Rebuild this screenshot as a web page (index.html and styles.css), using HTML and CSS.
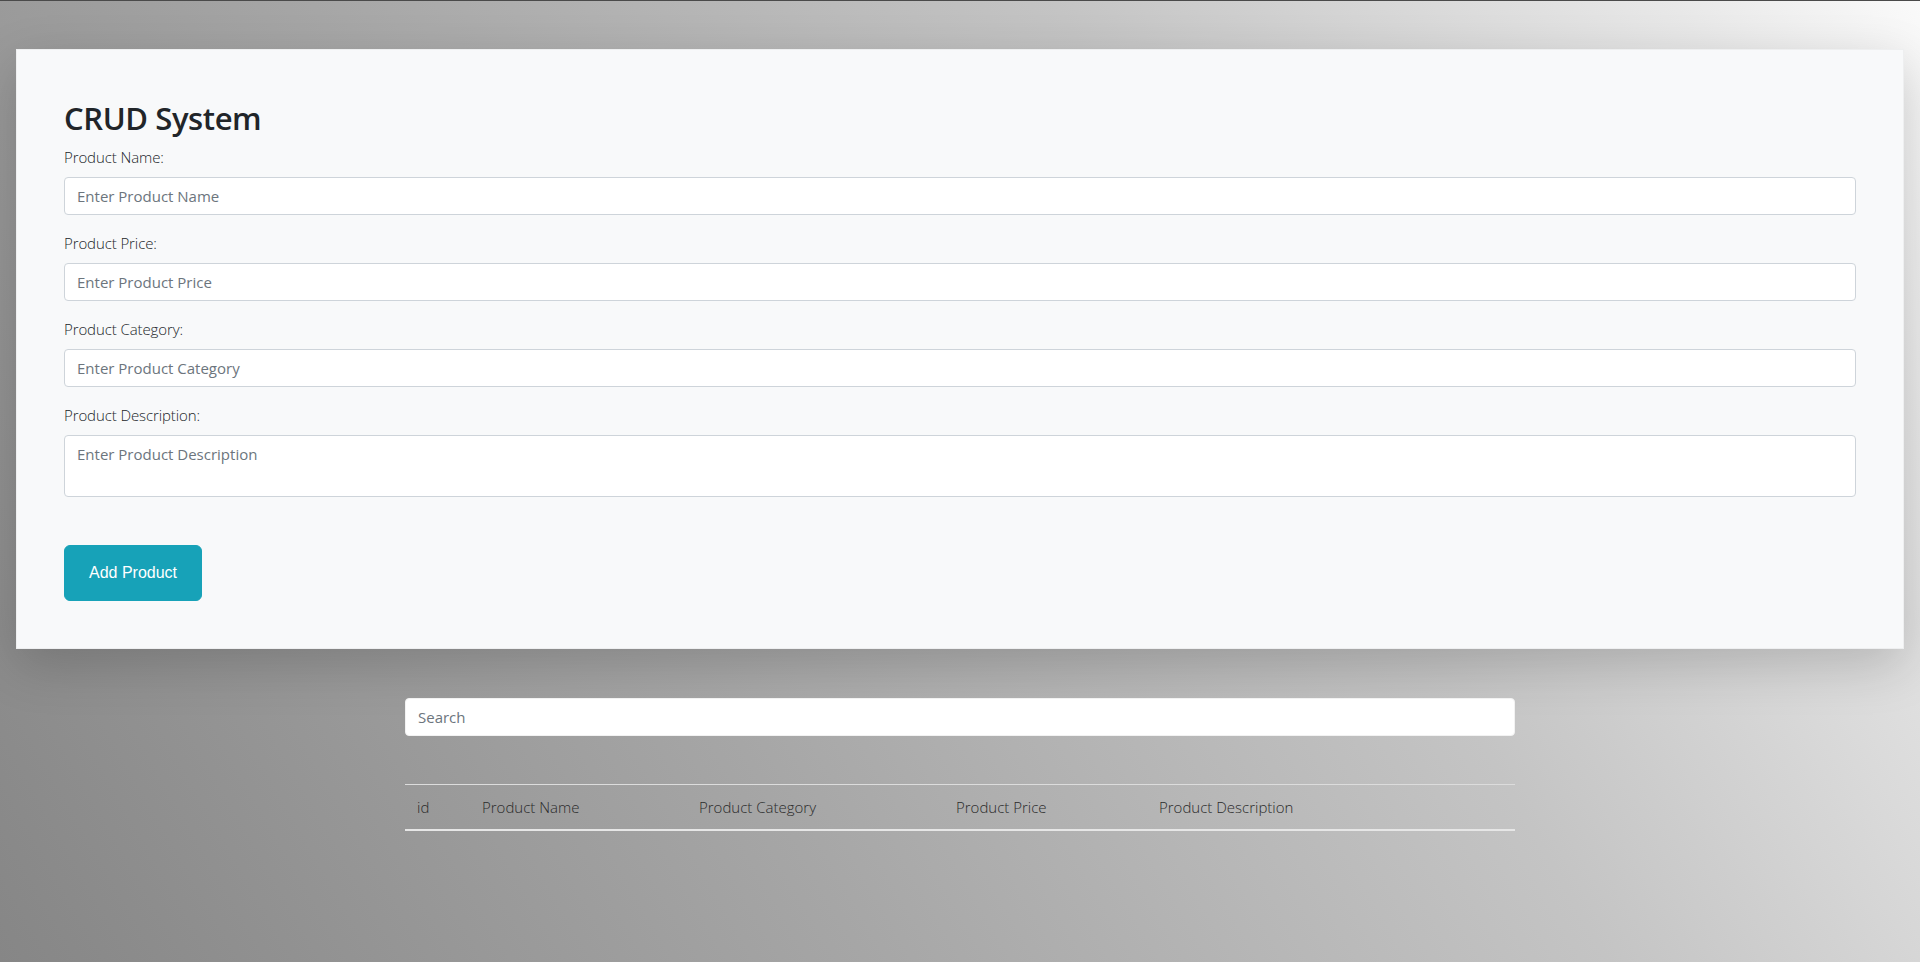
FILE: index.html
```html
<!DOCTYPE html>
<html lang="en">
<head>
<meta charset="utf-8">
<title>CRUD System</title>
<link rel="stylesheet" href="styles.css">
</head>
<body>
  <main class="page">
    <section class="card">
      <h2 class="title">CRUD System</h2>
      <div class="field">
        <label class="label" for="pname">Product Name:</label>
        <input class="control" id="pname" type="text" placeholder="Enter Product Name">
      </div>
      <div class="field">
        <label class="label" for="pprice">Product Price:</label>
        <input class="control" id="pprice" type="text" placeholder="Enter Product Price">
      </div>
      <div class="field">
        <label class="label" for="pcat">Product Category:</label>
        <input class="control" id="pcat" type="text" placeholder="Enter Product Category">
      </div>
      <div class="field field-last">
        <label class="label" for="pdesc">Product Description:</label>
        <textarea class="control textarea" id="pdesc" rows="2" placeholder="Enter Product Description"></textarea>
      </div>
      <button class="btn-add" type="button">Add Product</button>
    </section>

    <section class="container">
      <input class="control search" type="text" placeholder="Search">
      <table class="table">
        <colgroup>
          <col class="c-id">
          <col class="c-name">
          <col class="c-cat">
          <col class="c-price">
          <col class="c-desc">
        </colgroup>
        <thead>
          <tr>
            <th>id</th>
            <th>Product Name</th>
            <th>Product Category</th>
            <th>Product Price</th>
            <th>Product Description</th>
          </tr>
        </thead>
        <tbody></tbody>
      </table>
    </section>
  </main>
</body>
</html>
```

FILE: styles.css
```css
* {
  box-sizing: border-box;
}

html, body {
  margin: 0;
  padding: 0;
}

body {
  min-height: 962px;
  font-family: "Open Sans", "Noto Sans", "DejaVu Sans", sans-serif;
  font-size: 15px;
  line-height: 24px;
  color: #212529;
  border-top: 1px solid #4a4a4a;
  background: linear-gradient(60deg, #868686 0%, #a6a6a6 35%, #c4c4c4 65%, #e8e8e8 90%, #fafafa 100%);
}

.page {
  display: flex;
  flex-direction: column;
  padding: 48px 16px 0;
}

.card {
  background: #f8f9fa;
  border: 1px solid rgba(0, 0, 0, 0.04);
  padding: 47px 47px 47px;
  box-shadow: 0 16px 48px rgba(0, 0, 0, 0.18);
  display: flex;
  flex-direction: column;
  align-items: flex-start;
}

.title {
  margin: 0 0 8px;
  padding-top: 2px;
  font-size: 31px;
  line-height: 38px;
  font-weight: 600;
  color: #212529;
  letter-spacing: -0.4px;
}

.field {
  width: 100%;
  margin-bottom: 16px;
  display: flex;
  flex-direction: column;
}

.field-last {
  margin-bottom: 0;
}

.label {
  display: block;
  margin-bottom: 8px;
  font-weight: 300;
  color: #212529;
  letter-spacing: -0.1px;
}

.control {
  display: block;
  width: 100%;
  height: 38px;
  padding: 6px 12px;
  font-family: "Open Sans", "Noto Sans", "DejaVu Sans", sans-serif;
  font-size: 15px;
  line-height: 24px;
  color: #495057;
  background: #fff;
  border: 1px solid #ced4da;
  border-radius: 4px;
  outline: none;
}

.control::placeholder {
  color: #6c757d;
  opacity: 1;
}

.textarea {
  height: 62px;
  resize: none;
}

.btn-add {
  margin-top: 48px;
  padding: 15px 24px;
  font-family: "Liberation Sans", Arial, sans-serif;
  font-size: 16px;
  line-height: 24px;
  color: #fff;
  background: #17a2b8;
  border: 1px solid #17a2b8;
  border-radius: 6px;
  cursor: pointer;
}

.container {
  width: 1110px;
  margin: 49px auto 0;
  display: flex;
  flex-direction: column;
}

.search {
  border-color: #f2f2f2;
}

.table {
  margin-top: 48px;
  width: 100%;
  border-collapse: collapse;
  table-layout: fixed;
}

.c-id { width: 65px; }
.c-name { width: 217px; }
.c-cat { width: 257px; }
.c-price { width: 203px; }
.c-desc { width: 368px; }

.table th {
  padding: 10px 12px;
  text-align: left;
  font-weight: 300;
  color: #2b2b2b;
  border-top: 1px solid #dcdcdc;
  border-bottom: 2px solid #e6e6e6;
  white-space: nowrap;
}
```
